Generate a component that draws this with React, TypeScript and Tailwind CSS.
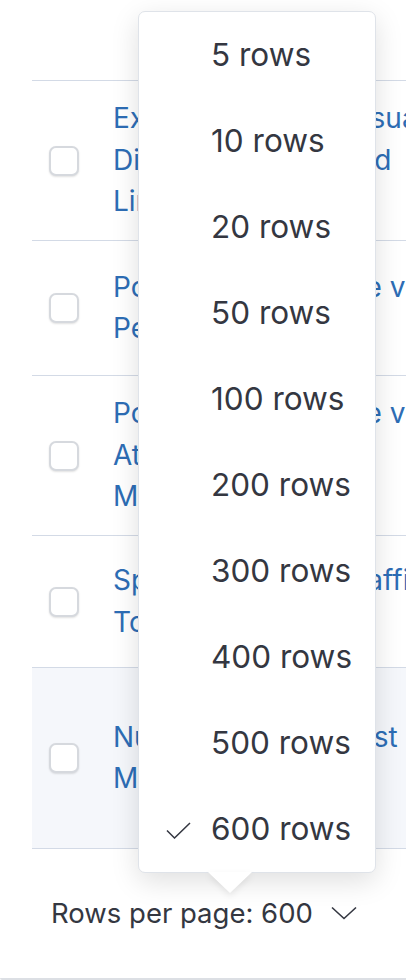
const rows = [
  { h: 'h-[160px]', lines: ['Exploring Kibana Visual', 'Distributed Apps and', 'Linked Services'] },
  { h: 'h-[135px]', lines: ['Posting the Observe views', 'Performance'] },
  { h: 'h-[160px]', lines: ['Posting the Observe views', 'Attention and Alert', 'Monitoring'] },
  { h: 'h-[132px]', lines: ["Spotting Elastic's traffic", 'Tools'] },
  { h: 'h-[181px]', lines: ['Nurturing a Specialist', 'Monitoring'], active: true },
];

const options = [5, 10, 20, 50, 100, 200, 300, 400, 500, 600];

export default function App() {
  return (
    <div className="relative w-[406px] h-[980px] overflow-hidden bg-white font-['Inter',sans-serif] text-[#343741]">
      {/* table */}
      <div className="pt-[80px] pl-[32px]">
        <div className="border-t border-[#d3dae6]">
          {rows.map((row, i) => (
            <div
              key={i}
              className={`${row.h} flex items-center border-b border-[#d3dae6] pl-[17px] ${row.active ? 'bg-[#f5f7fb]' : ''}`}
            >
              <div className="w-[30px] h-[30px] shrink-0 rounded-[7px] border-2 border-[#d6d9de] bg-white shadow-[0_1px_2px_rgba(0,0,0,0.12)]" />
              <div className="ml-[34px] text-[28px] leading-[41.5px] text-[#2d6db5] whitespace-nowrap">
                {row.lines.map((l, j) => (
                  <div key={j}>{l}</div>
                ))}
              </div>
            </div>
          ))}
        </div>
      </div>

      {/* pagination */}
      <div className="flex items-center pl-[51px] pt-[44px]">
        <span className="text-[27.5px] leading-[40px]">Rows per page: 600</span>
        <svg className="ml-[18px] w-[26px] h-[14px]" viewBox="0 0 26 14" fill="none" stroke="#343741" strokeWidth="1.6">
          <polyline points="1,1.5 13,12.5 25,1.5" />
        </svg>
      </div>

      <div className="absolute left-0 right-0 bottom-0 h-[2px] rounded-bl-[6px] bg-[#dcdfe4]" />

      {/* popover */}
      <div className="absolute left-[138px] top-[11px] w-[238px] rounded-[7px] border border-[#dfe3e9] bg-white shadow-[0_8px_28px_rgba(0,0,0,0.13)]">
        {options.map((n) => (
          <div key={n} className="relative h-[86px] flex items-center pl-[72px] text-[31.5px]">
            {n === 600 && (
              <svg className="absolute left-[27px] top-[36px] w-[25px] h-[17px]" viewBox="0 0 25 17" fill="none" stroke="#343741" strokeWidth="1.5">
                <polyline points="1,8.5 8.5,16 24,1" />
              </svg>
            )}
            {n} rows
          </div>
        ))}
        <div className="absolute left-[69px] -bottom-[21px] w-0 h-0 border-l-[22px] border-r-[22px] border-t-[21px] border-l-transparent border-r-transparent border-t-white drop-shadow-[0_3px_3px_rgba(0,0,0,0.08)]" />
      </div>
    </div>
  );
}
